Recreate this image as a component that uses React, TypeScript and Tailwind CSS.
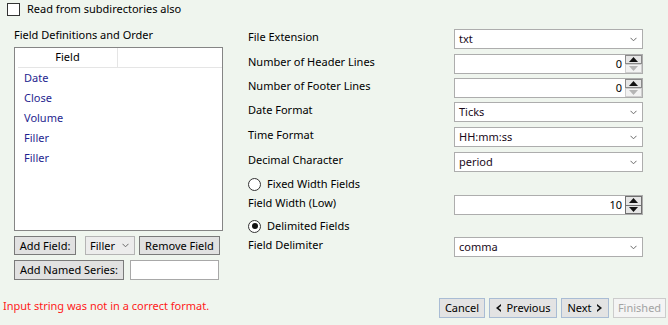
import React from 'react'

const fields = ['Date', 'Close', 'Volume', 'Filler', 'Filler']

function Chevron() {
    return (
        <svg width="7" height="5" viewBox="0 0 7 5">
            <path d="M0.5 0.8 L3.5 3.8 L6.5 0.8" fill="none" stroke="#6a6a6a" strokeWidth="1" />
        </svg>
    )
}

function Arrow({ up, color }: { up: boolean; color: string }) {
    return (
        <svg width="9" height="5" viewBox="0 0 9 5">
            {up ? <path d="M0 5 L4.5 0 L9 5 Z" fill={color} /> : <path d="M0 0 L4.5 5 L9 0 Z" fill={color} />}
        </svg>
    )
}

function Combo({ value }: { value: string }) {
    return (
        <div className="flex h-[20px] w-[189px] items-center justify-between border border-[#adadad] bg-white pl-[4px] pr-[5px] text-[#1a0a1a]">
            <span className="leading-[18px]">{value}</span>
            <Chevron />
        </div>
    )
}

function Spinner({ value, downOn }: { value: string; downOn: boolean }) {
    return (
        <div className="flex h-[20px] w-[189px] border border-[#adadad] bg-white">
            <span className="flex-1 pr-[3px] text-right leading-[18px] text-black">{value}</span>
            <div className={`flex w-[17px] flex-col ${downOn ? 'border border-[#707070]' : ''}`}>
                <div className={`flex flex-1 items-center justify-center bg-[#e6e6e6] ${downOn ? 'border-b border-[#707070]' : 'border border-[#8a8a8a]'}`}>
                    <Arrow up color="#111" />
                </div>
                <div className={`flex flex-1 items-center justify-center ${downOn ? 'bg-[#e6e6e6]' : 'border border-[#cfcfcf] bg-[#f2f2f2]'}`}>
                    <Arrow up={false} color={downOn ? '#111' : '#b5b5b5'} />
                </div>
            </div>
        </div>
    )
}

function Radio({ checked, label }: { checked: boolean; label: string }) {
    return (
        <div className="flex h-[16px] items-center">
            <span className="flex h-[13px] w-[13px] items-center justify-center rounded-full border border-[#333] bg-white">
                {checked && <span className="h-[6px] w-[6px] rounded-full bg-[#111]" />}
            </span>
            <span className="ml-[6px] leading-[16px]">{label}</span>
        </div>
    )
}

function Row({ label, children, className = '' }: { label: string; children: React.ReactNode; className?: string }) {
    return (
        <div className={`flex items-start ${className}`}>
            <span className="w-[206px] leading-[16px]">{label}</span>
            {children}
        </div>
    )
}

function Btn({ children, className = '' }: { children: React.ReactNode; className?: string }) {
    return (
        <div className={`flex items-center justify-center border border-[#7a7a7a] bg-[#e1e1e1] leading-[16px] ${className}`}>
            {children}
        </div>
    )
}

function NavBtn({ children, className = '', disabled = false }: { children: React.ReactNode; className?: string; disabled?: boolean }) {
    return (
        <div
            className={`flex h-[20px] items-center justify-center border leading-[16px] ${
                disabled ? 'border-[#cccccc] bg-[#f4f4f4] text-[#a3a3a3]' : 'border-[#a9bcd4] bg-[#e3e3e3] text-black'
            } ${className}`}
        >
            {children}
        </div>
    )
}

export default function App() {
    return (
        <div className="flex h-[325px] w-[668px] flex-col overflow-hidden bg-[#eff5ee] font-['Noto_Sans',sans-serif] text-[11px] text-black">
            {/* top checkbox */}
            <div className="flex h-[18px] items-center pl-[7px]">
                <span className="h-[13px] w-[13px] border border-[#333] bg-white" />
                <span className="ml-[7px] leading-[16px]">Read from subdirectories also</span>
            </div>

            <div className="mt-[9px] flex">
                {/* left column */}
                <div className="ml-[14px] flex w-[209px] flex-col">
                    <span className="leading-[16px]">Field Definitions and Order</span>
                    <div className="mt-[4px] h-[184px] border border-[#858585] bg-white">
                        <div className="ml-[3px] flex h-[20px] border-b border-[#e5e5e5]">
                            <div className="flex w-[100px] items-center justify-center border-r border-[#e5e5e5]">Field</div>
                        </div>
                        <div className="flex flex-col pl-[9px] pt-[1px] text-[#1f1f8f]">
                            {fields.map((f, i) => (
                                <span key={i} className="h-[20px] leading-[18px]">
                                    {f}
                                </span>
                            ))}
                        </div>
                    </div>
                    <div className="mt-[5px] flex h-[19px] items-stretch">
                        <Btn className="w-[62px]">Add Field:</Btn>
                        <div className="ml-[9px] flex w-[50px] items-center justify-between border border-[#b4b4b4] bg-[#ececec] pl-[4px] pr-[5px]">
                            <span className="leading-[16px]">Filler</span>
                            <Chevron />
                        </div>
                        <Btn className="ml-[4px] w-[81px]">Remove Field</Btn>
                    </div>
                    <div className="mt-[5px] flex h-[20px] items-stretch">
                        <Btn className="w-[110px]">Add Named Series:</Btn>
                        <div className="ml-[6px] w-[89px] border border-[#a8a8a8] bg-white" />
                    </div>
                </div>

                {/* right column */}
                <div className="ml-[25px] flex flex-col">
                    <Row label="File Extension" className="mt-[2px]">
                        <Combo value="txt" />
                    </Row>
                    <Row label="Number of Header Lines" className="mt-[5px]">
                        <Spinner value="0" downOn={false} />
                    </Row>
                    <Row label="Number of Footer Lines" className="mt-[4px]">
                        <Spinner value="0" downOn={false} />
                    </Row>
                    <Row label="Date Format" className="mt-[4px]">
                        <Combo value="Ticks" />
                    </Row>
                    <Row label="Time Format" className="mt-[5px]">
                        <Combo value="HH:mm:ss" />
                    </Row>
                    <Row label="Decimal Character" className="mt-[5px]">
                        <Combo value="period" />
                    </Row>
                    <div className="mt-[4px]">
                        <Radio checked={false} label="Fixed Width Fields" />
                    </div>
                    <Row label="Field Width (Low)" className="mt-[3px]">
                        <Spinner value="10" downOn />
                    </Row>
                    <div className="mt-[3px]">
                        <Radio checked label="Delimited Fields" />
                    </div>
                    <Row label="Field Delimiter" className="mt-[3px]">
                        <Combo value="comma" />
                    </Row>
                </div>
            </div>

            {/* bottom */}
            <div className="mt-[18px] flex items-start justify-between pl-[3px] pr-[2px]">
                <span className="leading-[16px] text-[#ff1a1a]">Input string was not in a correct format.</span>
                <div className="flex gap-[4px]">
                    <NavBtn className="w-[46px]">Cancel</NavBtn>
                    <NavBtn className="w-[68px]">
                        <svg width="7" height="8" viewBox="0 0 7 8" className="mr-[4px]">
                            <path d="M6 0 L1 4 L6 8 L6 6 L3.5 4 L6 2 Z" fill="#111" />
                        </svg>
                        Previous
                    </NavBtn>
                    <NavBtn className="w-[48px]">
                        Next
                        <svg width="7" height="8" viewBox="0 0 7 8" className="ml-[4px]">
                            <path d="M1 0 L6 4 L1 8 L1 6 L3.5 4 L1 2 Z" fill="#111" />
                        </svg>
                    </NavBtn>
                    <NavBtn className="w-[53px]" disabled>
                        Finished
                    </NavBtn>
                </div>
            </div>
        </div>
    )
}
